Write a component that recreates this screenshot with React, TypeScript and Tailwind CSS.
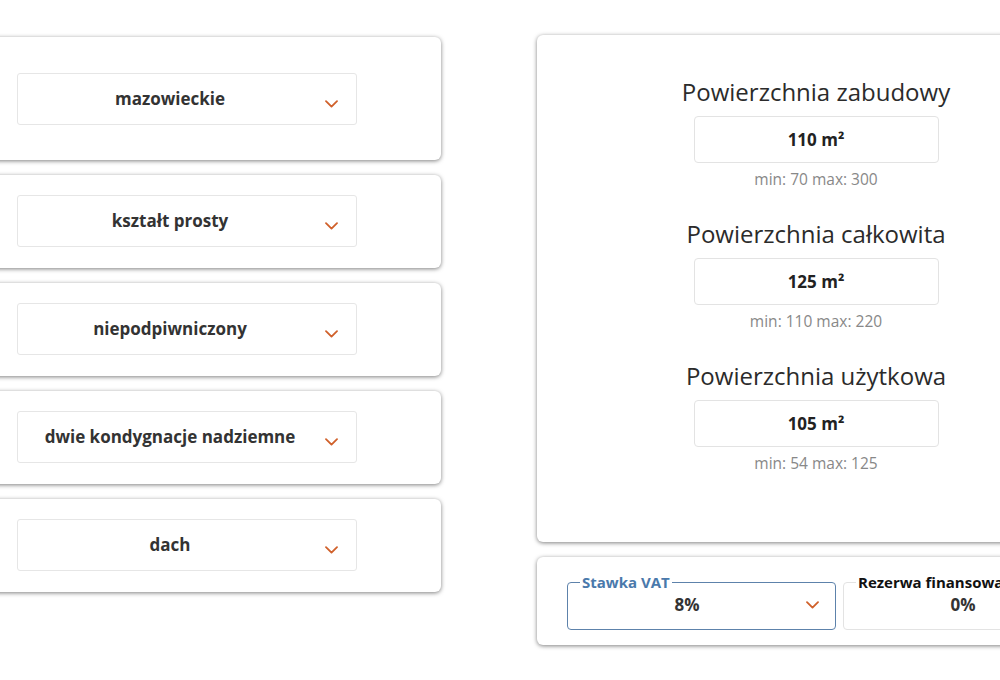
import React from "react";

const font = { fontFamily: '"Open Sans", "Noto Sans", Arial, sans-serif' };

const Chevron = () => (
  <svg width="13" height="8" viewBox="0 0 13 8" fill="none" className="shrink-0 mt-[9px]">
    <path d="M1 1.2 L6.5 6.6 L12 1.2" stroke="#d0612b" strokeWidth="1.8" strokeLinecap="round" strokeLinejoin="round" />
  </svg>
);

const SelectCard = ({ label, first }: { label: string; first?: boolean }) => (
  <div
    className={`bg-white rounded-md shadow-[0_1px_4px_rgba(0,0,0,0.5)] px-[84px] ${
      first ? "pt-[36px] pb-[35px]" : "pt-[20px] pb-[21px]"
    }`}
  >
    <div className="h-[52px] w-full flex items-center border border-[#e6e6e6] rounded-[3px] bg-white">
      <span className="flex-1 text-center text-[17px] font-bold text-[#333]">{label}</span>
      <span className="ml-[3px] mr-[18px] flex">
        <Chevron />
      </span>
    </div>
  </div>
);

const AreaField = ({ title, value, min, max }: { title: string; value: string; min: number; max: number }) => (
  <div className="flex flex-col items-center">
    <h2 className="text-[24px] leading-[32px] text-[#2b2b2b]">{title}</h2>
    <div className="mt-2 w-[245px] h-[47px] border border-[#e3e3e3] rounded-[4px] flex items-center justify-center">
      <span className="text-[17px] font-bold text-[#222]">{value}</span>
    </div>
    <p className="mt-[6px] text-[15.5px] leading-[20px] text-[#888]">
      min: {min} max: {max}
    </p>
  </div>
);

export default function App() {
  const options = ["mazowieckie", "kształt prosty", "niepodpiwniczony", "dwie kondygnacje nadziemne", "dach"];
  const areas = [
    { title: "Powierzchnia zabudowy", value: "110 m²", min: 70, max: 300 },
    { title: "Powierzchnia całkowita", value: "125 m²", min: 110, max: 220 },
    { title: "Powierzchnia użytkowa", value: "105 m²", min: 54, max: 125 },
  ];

  return (
    <div className="w-[1000px] h-[680px] overflow-hidden bg-white flex items-start" style={font}>
      <div className="ml-[-67px] mt-[37px] w-[508px] shrink-0 flex flex-col gap-[15px]">
        {options.map((o, i) => (
          <SelectCard key={o} label={o} first={i === 0} />
        ))}
      </div>

      <div className="ml-[96px] mt-[35px] w-[558px] shrink-0 flex flex-col gap-[15px]">
        <div className="h-[507px] bg-white rounded-md shadow-[0_1px_4px_rgba(0,0,0,0.5)] pt-[41px] flex flex-col gap-[29px]">
          {areas.map((a) => (
            <AreaField key={a.title} {...a} />
          ))}
        </div>

        <div className="h-[88px] bg-white rounded-md shadow-[0_1px_4px_rgba(0,0,0,0.5)] pl-[30px] pt-[15px] flex gap-[7px]">
          <fieldset className="w-[269px] h-[58px] shrink-0 border border-[#5d82ab] rounded-[4px] flex pl-0 pr-0">
            <legend className="ml-[12px] px-[2px] text-[15px] leading-[20px] font-bold text-[#4a79ab]">Stawka VAT</legend>
            <div className="w-full flex items-start">
              <span className="flex-1 text-center text-[17px] font-bold text-[#333]">8%</span>
              <span className="mr-[16px] flex">
                <Chevron />
              </span>
            </div>
          </fieldset>
          <fieldset className="w-[269px] h-[58px] shrink-0 border border-[#e3e3e3] rounded-[4px] flex pl-0 pr-0">
            <legend className="ml-[12px] px-[2px] text-[15px] leading-[20px] font-bold text-[#111]">Rezerwa finansowa</legend>
            <div className="w-full flex items-start">
              <span className="flex-1 text-center text-[17px] font-bold text-[#333]">0%</span>
              <span className="mr-[16px] flex">
                <Chevron />
              </span>
            </div>
          </fieldset>
        </div>
      </div>
    </div>
  );
}
